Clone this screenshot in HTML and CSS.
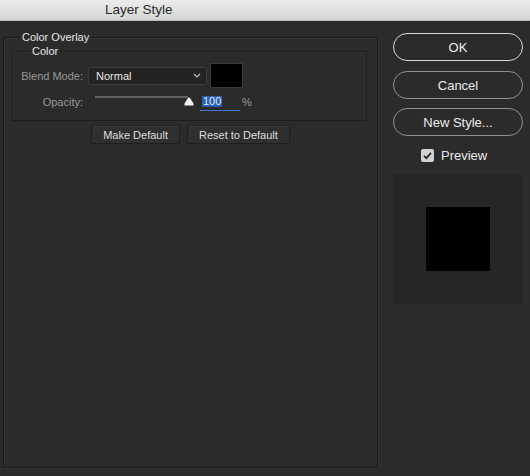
FILE: index.html
```html
<!DOCTYPE html>
<html>
<head>
<meta charset="utf-8">
<link rel="stylesheet" href="styles.css">
</head>
<body>
<div class="titlebar"><span class="title">Layer Style</span></div>
<div class="main">
  <div class="left">
    <fieldset class="outer">
      <legend class="lg-outer">Color Overlay</legend>
      <fieldset class="inner">
        <legend class="lg-inner">Color</legend>
        <div class="row blend">
          <span class="lbl">Blend Mode:</span>
          <div class="select"><span>Normal</span>
            <svg class="chev" width="8" height="5" viewBox="0 0 8 5"><path d="M1 1 L4 4 L7 1" fill="none" stroke="#bdbdbd" stroke-width="1.2"/></svg>
          </div>
          <div class="swatch"></div>
        </div>
        <div class="row opacity">
          <span class="lbl">Opacity:</span>
          <div class="slider">
            <div class="track"></div>
            <svg class="thumb" width="10" height="9" viewBox="0 0 10 9"><path d="M5 0.5 C5.6 0.5 6 1 6.5 1.8 L9.5 6.5 L9.5 8.5 L0.5 8.5 L0.5 6.5 L3.5 1.8 C4 1 4.4 0.5 5 0.5 Z" fill="#f2f2f2"/></svg>
          </div>
          <div class="num"><span class="sel">100</span></div>
          <span class="pct">%</span>
        </div>
      </fieldset>
      <div class="btnrow">
        <button class="sbtn">Make Default</button>
        <button class="sbtn">Reset to Default</button>
      </div>
    </fieldset>
  </div>
  <div class="right">
    <button class="pill ok">OK</button>
    <button class="pill">Cancel</button>
    <button class="pill">New Style...</button>
    <div class="preview-row">
      <span class="check"><svg width="13" height="13" viewBox="0 0 13 13"><path d="M3 6.8 L5.4 9.2 L10 3.8" fill="none" stroke="#2a2a2a" stroke-width="1.8"/></svg></span>
      <span class="pv-label">Preview</span>
    </div>
    <div class="preview-box"><div class="preview-sq"></div></div>
  </div>
</div>
</body>
</html>
```
FILE: styles.css
```css
* { box-sizing: border-box; }
html, body { margin: 0; padding: 0; }
body {
  width: 530px;
  height: 476px;
  background: #2b2b2b;
  font-family: "Liberation Sans", Arial, sans-serif;
  color: #e4e4e4;
  overflow: hidden;
}
.titlebar {
  height: 21px;
  background: linear-gradient(#ececec, #d5d5d5);
  border-bottom: 1px solid #b8b8b8;
  padding-left: 105px;
  display: flex;
  align-items: center;
}
.title {
  font-size: 13.5px;
  color: #2b2b2b;
  line-height: 20px;
}
.main {
  display: flex;
  height: 455px;
}
.left {
  width: 378px;
  padding: 9px 0 0 3px;
}
fieldset { margin: 0; min-width: 0; }
legend {
  padding: 0 2px;
  font-size: 11px;
  line-height: 14px;
  color: #e6e6e6;
}
.outer {
  width: 375px;
  height: 438px;
  border: 1px solid #1b1b1b;
  box-shadow: inset 1px 1px 0 #333, 1px 1px 0 #333;
  padding: 0 0 0 8px;
}
.lg-outer { margin-left: 8px; }
.inner {
  width: 355px;
  height: 77px;
  border: 1px solid #1e1e1e;
  box-shadow: inset 1px 1px 0 #323232;
  padding: 5px 0 0 0;
}
.lg-inner { margin-left: 17px; }
.row {
  display: flex;
  align-items: center;
}
.lbl {
  width: 70px;
  text-align: right;
  font-size: 11px;
  color: #979797;
  margin-right: 5px;
}
.blend { height: 25px; }
.select {
  width: 119px;
  height: 18px;
  background: #232323;
  border: 1px solid #3c3c3c;
  border-radius: 2px;
  display: flex;
  align-items: center;
  justify-content: space-between;
  padding: 0 5px 0 7px;
  font-size: 11px;
  color: #e8e8e8;
}
.swatch {
  width: 33px;
  height: 25px;
  background: #000;
  border: 1px solid #3a3a3a;
  margin-left: 3px;
}
.opacity { height: 18px; margin-top: 5px; }
.slider {
  position: relative;
  width: 99px;
  height: 18px;
  margin-left: 7px;
}
.track {
  position: absolute;
  left: 0;
  top: 3px;
  width: 93px;
  height: 2px;
  background: #626262;
}
.thumb {
  position: absolute;
  left: 89px;
  top: 4px;
}
.num {
  width: 40px;
  height: 17px;
  margin-left: 6px;
  border-bottom: 1px solid #3d7ad0;
  padding: 1px 0 0 2px;
  font-size: 11px;
}
.sel {
  background: #2d5fae;
  color: #dfe8f7;
  padding: 0 1px;
  line-height: 11px;
  display: inline-block;
}
.pct {
  font-size: 11px;
  color: #9a9a9a;
  margin-left: 2px;
}
.btnrow {
  display: flex;
  justify-content: center;
  gap: 7px;
  margin-top: 4px;
  padding-right: 8px;
}
.sbtn {
  height: 19px;
  padding: 0 11px;
  background: #2f2f2f;
  border: 1px solid #1f1f1f;
  border-radius: 2px;
  box-shadow: inset 0 1px 0 #3a3a3a;
  font-family: "Liberation Sans", Arial, sans-serif;
  font-size: 11px;
  color: #dedede;
}
.right {
  width: 152px;
  padding: 12px 0 0 15px;
  display: flex;
  flex-direction: column;
}
.pill {
  width: 130px;
  height: 28px;
  border-radius: 14px;
  border: 1.3px solid #8f8f8f;
  background: transparent;
  font-family: "Liberation Sans", Arial, sans-serif;
  font-size: 13px;
  color: #ececec;
  margin-bottom: 9px;
  padding: 0;
}
.pill.ok { border-color: #d6d6d6; margin-bottom: 10px; }
.preview-row {
  display: flex;
  align-items: center;
  padding-left: 28px;
  height: 16px;
  margin-top: 2px;
}
.check {
  width: 13px;
  height: 13px;
  border-radius: 2px;
  background: #d2d2d2;
  display: flex;
}
.pv-label {
  font-size: 13px;
  margin-left: 7px;
  color: #e8e8e8;
}
.preview-box {
  width: 130px;
  height: 130px;
  margin-top: 11px;
  background: #262626;
  display: flex;
  align-items: center;
  justify-content: center;
}
.preview-sq {
  width: 64px;
  height: 64px;
  background: #000;
}
```
